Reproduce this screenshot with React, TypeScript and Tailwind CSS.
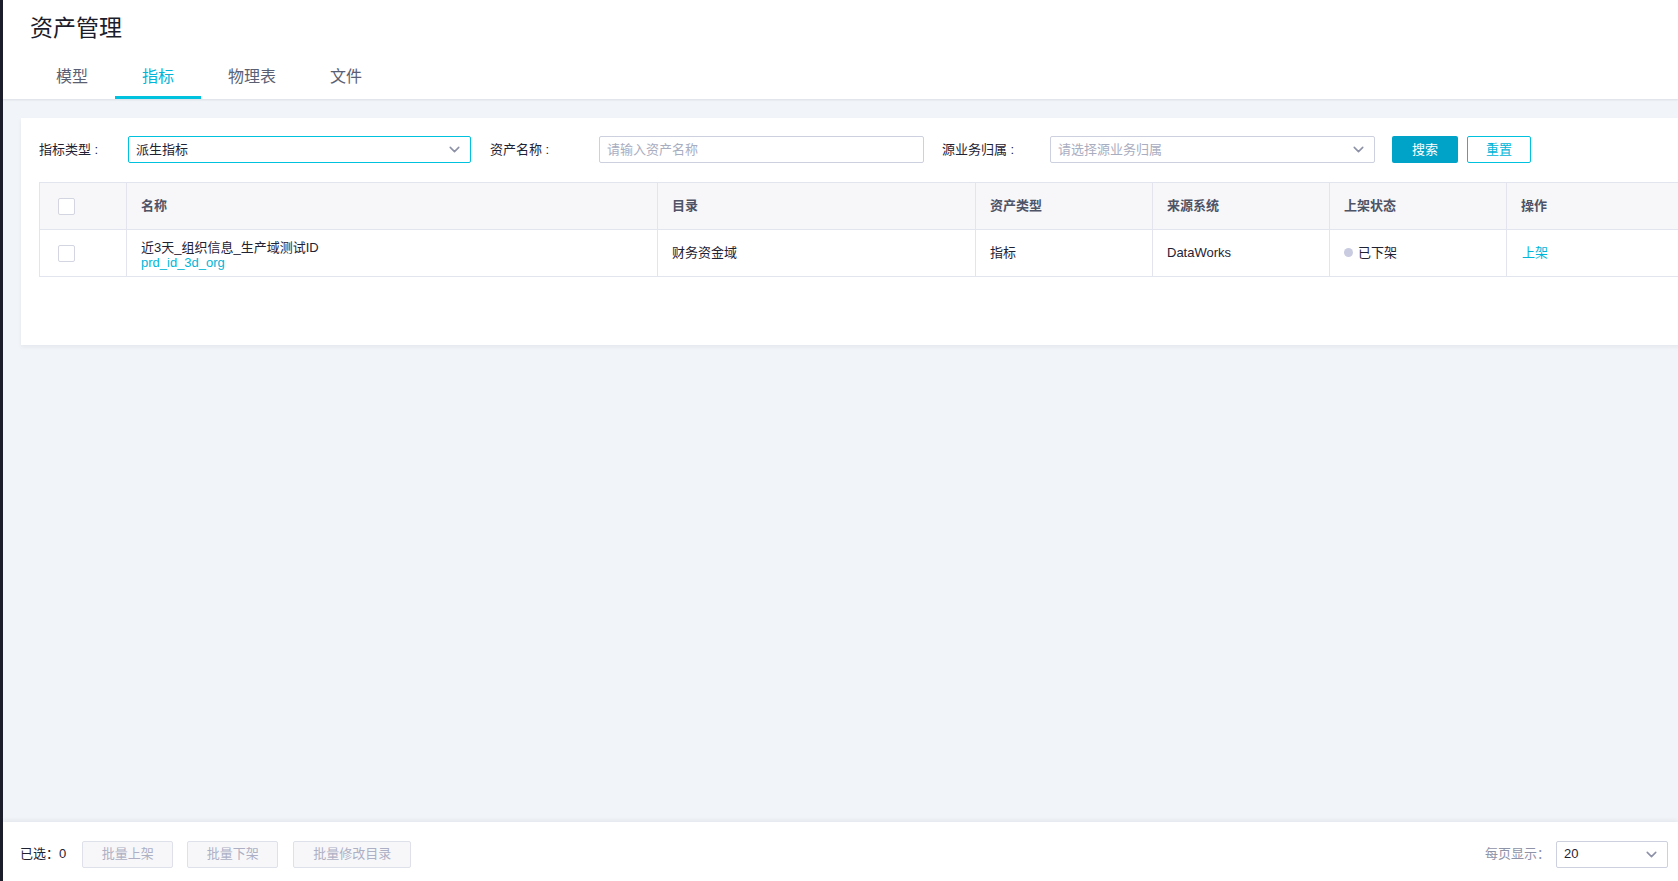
import { ChevronDown } from "lucide-react";

const tabs = ["模型", "指标", "物理表", "文件"];

const columns = [
  { key: "check", width: 87 },
  { key: "name", label: "名称", width: 531 },
  { key: "dir", label: "目录", width: 318 },
  { key: "type", label: "资产类型", width: 177 },
  { key: "source", label: "来源系统", width: 177 },
  { key: "status", label: "上架状态", width: 177 },
  { key: "op", label: "操作", width: 200 },
];

function Checkbox() {
  return <span className="block w-[17px] h-[17px] rounded-[2px] border border-[#d3d5e0] bg-white" />;
}

function SelectBox({ value, placeholder, active, className }: { value?: string; placeholder?: string; active?: boolean; className: string }) {
  return (
    <div
      className={`flex items-center justify-between h-[27px] pl-[7px] pr-[7px] rounded-[2px] border bg-white ${
        active ? "border-[#00c1de]" : "border-[#cdd0de]"
      } ${className}`}
    >
      {value ? (
        <span className="text-[13px] text-[#1f2233]">{value}</span>
      ) : (
        <span className="text-[13px] text-[#a9adc0]">{placeholder}</span>
      )}
      <ChevronDown size={17} strokeWidth={2.2} className="text-[#8d91a8]" />
    </div>
  );
}

export default function App() {
  return (
    <div className="flex h-[881px] w-full overflow-hidden font-['Liberation_Sans','Noto_Sans_CJK_SC',sans-serif] text-[#1f2233]">
      {/* dark strip on the left */}
      <div className="w-[3px] shrink-0 bg-[#1d1e2c]" />

      <div className="flex flex-col flex-1 min-w-0 bg-[#f1f4f8]">
        {/* Header */}
        <div className="bg-white shadow-[0_1px_2px_rgba(30,40,70,0.10)] relative z-10">
          <h1 className="pl-[27px] pt-[13px] text-[23px] leading-[31px] font-normal text-[#1b1d2b]">资产管理</h1>
          <div className="flex pl-[26px] mt-[16px]">
            {tabs.map((t) => (
              <div
                key={t}
                className={`px-[27px] pt-[6px] pb-[8px] text-[16px] leading-[22px] border-b-[3px] ${
                  t === "指标" ? "border-[#00c1de] text-[#00b5d8]" : "border-transparent text-[#5b5f73]"
                }`}
              >
                {t}
              </div>
            ))}
          </div>
        </div>

        {/* Content */}
        <div className="flex-1 pl-[18px] pt-[19px] min-h-0">
          <div className="w-[1720px] bg-white px-[18px] pt-[18px] pb-[68px] shadow-[0_2px_4px_rgba(30,40,70,0.06)]">
            {/* Filters */}
            <div className="flex items-center text-[13px]">
              <span className="w-[89px] text-[#1f2233]">指标类型 :</span>
              <SelectBox value="派生指标" active className="w-[343px]" />
              <span className="ml-[19px] w-[109px] text-[#1f2233]">资产名称 :</span>
              <div className="w-[325px] h-[27px] flex items-center px-[7px] rounded-[2px] border border-[#cdd0de] text-[#a9adc0]">
                请输入资产名称
              </div>
              <span className="ml-[18px] w-[108px] text-[#1f2233]">源业务归属 :</span>
              <SelectBox placeholder="请选择源业务归属" className="w-[325px]" />
              <button className="ml-[17px] w-[66px] h-[27px] rounded-[2px] bg-[#00a3c8] text-white text-[13px]">搜索</button>
              <button className="ml-[9px] w-[64px] h-[27px] rounded-[2px] border border-[#00c1de] bg-white text-[#00b5d8] text-[13px]">重置</button>
            </div>

            {/* Table */}
            <table className="mt-[19px] table-fixed border-collapse text-[13px]">
              <colgroup>
                {columns.map((c) => (
                  <col key={c.key} style={{ width: c.width }} />
                ))}
              </colgroup>
              <thead>
                <tr className="h-[47px] bg-[#f7f7f9]">
                  {columns.map((c) => (
                    <th
                      key={c.key}
                      className="border border-[#e3e5ee] pl-[14px] text-left font-bold text-[#4f5366]"
                    >
                      {c.key === "check" ? <span className="block pl-[4px]"><Checkbox /></span> : c.label}
                    </th>
                  ))}
                </tr>
              </thead>
              <tbody>
                <tr className="h-[47px]">
                  <td className="border border-[#e3e5ee] pl-[18px]">
                    <Checkbox />
                  </td>
                  <td className="border border-[#e3e5ee] pl-[14px] pt-[4px] leading-[15px]">
                    <div className="text-[#1f2233]">近3天_组织信息_生产域测试ID</div>
                    <div className="text-[#00b5d8]">prd_id_3d_org</div>
                  </td>
                  <td className="border border-[#e3e5ee] pl-[14px]">财务资金域</td>
                  <td className="border border-[#e3e5ee] pl-[14px]">指标</td>
                  <td className="border border-[#e3e5ee] pl-[14px]">DataWorks</td>
                  <td className="border border-[#e3e5ee] pl-[14px]">
                    <span className="inline-flex items-center gap-[5px]">
                      <span className="w-[9px] h-[9px] rounded-full bg-[#c9cce0]" />
                      已下架
                    </span>
                  </td>
                  <td className="border border-[#e3e5ee] pl-[15px] text-[#00b5d8]">上架</td>
                </tr>
              </tbody>
            </table>
          </div>
        </div>

        {/* Bottom bar */}
        <div className="h-[59px] shrink-0 bg-white shadow-[0_-2px_4px_rgba(30,40,70,0.06)] flex items-center pl-[17px] pr-[10px] pt-[5px] text-[13px]">
          <span className="text-[#1f2233]">已选：0</span>
          <button className="ml-[16px] w-[91px] h-[27px] rounded-[2px] border border-[#dfe1ea] bg-[#f7f7fa] text-[#adb0c4]">批量上架</button>
          <button className="ml-[14px] w-[91px] h-[27px] rounded-[2px] border border-[#dfe1ea] bg-[#f7f7fa] text-[#adb0c4]">批量下架</button>
          <button className="ml-[15px] w-[118px] h-[27px] rounded-[2px] border border-[#dfe1ea] bg-[#f7f7fa] text-[#adb0c4]">批量修改目录</button>
          <span className="ml-auto text-[#8f93a8]">每页显示：</span>
          <SelectBox value="20" className="ml-[6px] w-[112px]" />
        </div>
      </div>
    </div>
  );
}
